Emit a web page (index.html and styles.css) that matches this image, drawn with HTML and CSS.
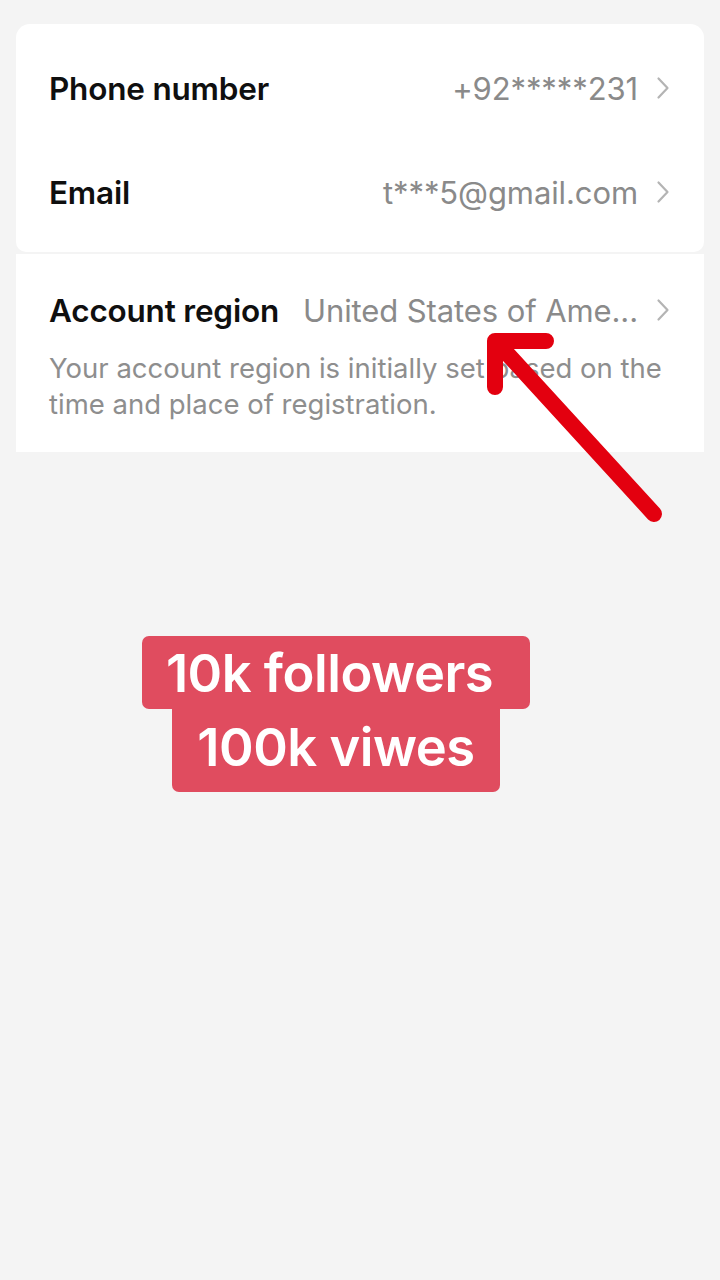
FILE: index.html
```html
<!DOCTYPE html>
<html lang="en">
<head>
<meta charset="utf-8">
<title>Account</title>
<link rel="stylesheet" href="styles.css">
</head>
<body>
<div class="page">
  <section class="card card-top">
    <div class="row">
      <span class="label">Phone number</span>
      <span class="value">+92*****231</span>
      <svg class="chev" viewBox="0 0 14 24" width="14" height="24"><path d="M2.5 2.5 L11.5 12 L2.5 21.5"/></svg>
    </div>
    <div class="row">
      <span class="label">Email</span>
      <span class="value">t***5@gmail.com</span>
      <svg class="chev" viewBox="0 0 14 24" width="14" height="24"><path d="M2.5 2.5 L11.5 12 L2.5 21.5"/></svg>
    </div>
  </section>
  <section class="card card-region">
    <div class="row row-region">
      <span class="label">Account region</span>
      <span class="value value-fill">United States of Ame...</span>
      <svg class="chev" viewBox="0 0 14 24" width="14" height="24"><path d="M2.5 2.5 L11.5 12 L2.5 21.5"/></svg>
    </div>
    <p class="desc">Your account region is initially set based on the time and place of registration.</p>
  </section>
  <div class="caption">
    <span class="cap cap1">10k followers</span>
    <span class="cap cap2">100k viwes</span>
  </div>
</div>
<svg class="arrow" viewBox="0 0 720 560" width="720" height="560">
  <path d="M654 514 L503 349"/>
  <path d="M495 387 L495 341 L546 341"/>
</svg>
</body>
</html>
```
FILE: styles.css
```css
html, body {
  margin: 0;
  padding: 0;
}
body {
  background: #f4f4f4;
  font-family: Inter, Roboto, "Liberation Sans", sans-serif;
  width: 720px;
  height: 1280px;
  position: relative;
  overflow: hidden;
}
.page {
  padding: 24px 16px 0;
  display: flex;
  flex-direction: column;
}
.card {
  background: #ffffff;
}
.card-top {
  border-radius: 14px 14px 10px 10px;
  padding: 12px 0 8px;
}
.card-region {
  margin-top: 2px;
  padding: 20px 0 30px;
}
.row {
  height: 104px;
  display: flex;
  align-items: center;
  padding: 0 34px 0 33px;
}
.row-region {
  height: 72px;
}
.label {
  font-size: 31.5px;
  font-weight: 600;
  color: #0f0f0f;
  white-space: nowrap;
  letter-spacing: -0.2px;
}
.value {
  margin-left: auto;
  font-size: 31px;
  color: #8a8a8a;
  white-space: nowrap;
  letter-spacing: -0.1px;
}
.value-fill {
  flex: 1;
  min-width: 0;
  text-align: right;
  overflow: hidden;
  text-overflow: ellipsis;
  padding-left: 24px;
}
.chev {
  flex: none;
  margin-left: 18px;
}
.chev path {
  fill: none;
  stroke: #b4b4b4;
  stroke-width: 2.2;
  stroke-linecap: round;
  stroke-linejoin: round;
}
.desc {
  margin: 4px 0 0;
  padding: 0 28px 0 33px;
  font-size: 27.5px;
  line-height: 36px;
  color: #8e8e8e;
}
.caption {
  margin-top: 184px;
  margin-right: 48px;
  display: flex;
  flex-direction: column;
  align-items: center;
  font-family: Inter, Roboto, "Liberation Sans", sans-serif;
  font-weight: 600;
  color: #ffffff;
}
.cap {
  background: #e04c5f;
  font-size: 52.5px;
  line-height: 57px;
  letter-spacing: -0.5px;
  white-space: nowrap;
}
.cap1 {
  padding: 9px 37px 7px 24px;
  border-radius: 7px;
}
.cap2 {
  padding: 10px 25px 16px;
  border-radius: 0 0 7px 7px;
}
.arrow {
  position: absolute;
  left: 0;
  top: 0;
}
.arrow path {
  fill: none;
  stroke: #e3000f;
  stroke-width: 16;
  stroke-linecap: round;
  stroke-linejoin: round;
}
```
